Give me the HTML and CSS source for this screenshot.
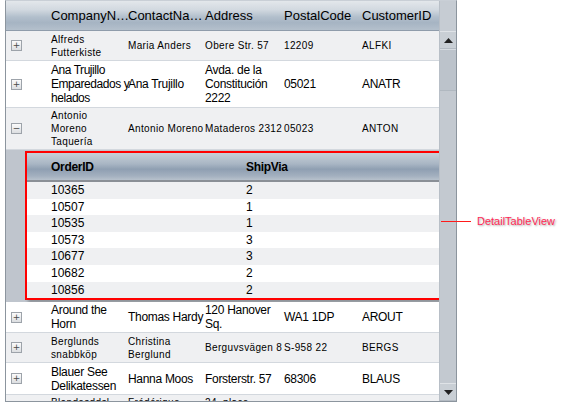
FILE: index.html
```html
<!DOCTYPE html>
<html>
<head>
<meta charset="utf-8">
<link rel="stylesheet" href="styles.css">
</head>
<body>
<div class="page">
  <div class="grid">
    <div class="main">
      <table class="master">
        <colgroup>
          <col class="c-exp"><col class="c-company"><col class="c-contact"><col class="c-address"><col class="c-postal"><col class="c-cust">
        </colgroup>
        <thead>
          <tr>
            <th></th><th>CompanyN…</th><th>ContactNa…</th><th>Address</th><th>PostalCode</th><th>CustomerID</th>
          </tr>
        </thead>
        <tbody>
          <tr class="alt small r1">
            <td><span class="exp">+</span></td><td>Alfreds<br>Futterkiste</td><td>Maria Anders</td><td>Obere Str. 57</td><td>12209</td><td>ALFKI</td>
          </tr>
          <tr class="r2">
            <td><span class="exp">+</span></td><td><span class="tight">Ana Trujillo<br>Emparedados y<br>helados</span></td><td>Ana Trujillo</td><td>Avda. de la<br>Constitución<br>2222</td><td>05021</td><td>ANATR</td>
          </tr>
          <tr class="alt small r3">
            <td><span class="exp">−</span></td><td>Antonio<br>Moreno<br>Taquería</td><td>Antonio Moreno</td><td>Mataderos 2312</td><td>05023</td><td>ANTON</td>
          </tr>
          <tr class="detail-row">
            <td class="gutter"></td>
            <td colspan="5" class="detail-cell">
              <div class="detail-box">
                <table class="detail">
                  <colgroup><col class="d-order"><col class="d-ship"></colgroup>
                  <thead><tr><th>OrderID</th><th>ShipVia</th></tr></thead>
                  <tbody>
                    <tr class="alt"><td>10365</td><td>2</td></tr>
                    <tr><td>10507</td><td>1</td></tr>
                    <tr class="alt"><td>10535</td><td>1</td></tr>
                    <tr><td>10573</td><td>3</td></tr>
                    <tr class="alt"><td>10677</td><td>3</td></tr>
                    <tr><td>10682</td><td>2</td></tr>
                    <tr class="alt"><td>10856</td><td>2</td></tr>
                  </tbody>
                </table>
              </div>
            </td>
          </tr>
          <tr class="r4">
            <td><span class="exp">+</span></td><td>Around the<br>Horn</td><td>Thomas Hardy</td><td>120 Hanover<br>Sq.</td><td>WA1 1DP</td><td>AROUT</td>
          </tr>
          <tr class="alt small r5">
            <td><span class="exp">+</span></td><td>Berglunds<br>snabbköp</td><td>Christina<br>Berglund</td><td>Berguvsvägen 8</td><td>S-958 22</td><td>BERGS</td>
          </tr>
          <tr class="r6">
            <td><span class="exp">+</span></td><td>Blauer See<br>Delikatessen</td><td>Hanna Moos</td><td>Forsterstr. 57</td><td>68306</td><td>BLAUS</td>
          </tr>
          <tr class="alt small r7">
            <td><span class="exp">+</span></td><td>Blondesddsl<br>père et fils</td><td>Frédérique<br>Citeaux</td><td>24, place<br>Kléber</td><td>67000</td><td>BLONP</td>
          </tr>
        </tbody>
      </table>
    </div>
    <div class="scrollbar">
      <div class="sb-cap"></div>
      <div class="sb-btn sb-up"><svg width="9" height="5" viewBox="0 0 9 5"><path d="M0 5 L4.5 0 L9 5 Z" fill="#222"/></svg></div>
      <div class="sb-thumb"></div>
      <div class="sb-track"></div>
      <div class="sb-btn sb-down"><svg width="9" height="5" viewBox="0 0 9 5"><path d="M0 0 L9 0 L4.5 5 Z" fill="#222"/></svg></div>
    </div>
  </div>
  <div class="callout">
    <span class="callout-line"></span>
    <span class="callout-label">DetailTableView</span>
  </div>
</div>
</body>
</html>
```
FILE: styles.css
```css
html, body {
  margin: 0;
  padding: 0;
  background: #ffffff;
}
body {
  font-family: "Liberation Sans", Arial, sans-serif;
  color: #000;
}
.page {
  position: relative;
  width: 561px;
  height: 412px;
}
.grid {
  margin-left: 5px;
  width: 450px;
  height: 400px;
  border: 1px solid #8c959e;
  border-top-color: #c9cfd6;
  display: flex;
  overflow: hidden;
}
.main {
  width: 434px;
  height: 400px;
  overflow: hidden;
}
table {
  border-collapse: collapse;
  table-layout: fixed;
}
.master {
  width: 434px;
}
.c-exp { width: 41px; }
.c-company { width: 77px; }
.c-contact { width: 77px; }
.c-address { width: 79px; }
.c-postal { width: 78px; }
.c-cust { width: 82px; }

.master thead th {
  height: 29px;
  padding: 0 0 0 4px;
  text-align: left;
  font-weight: normal;
  font-size: 13px;
  white-space: nowrap;
  overflow: visible;
  background: linear-gradient(#e3e7eb 0%, #d2d9e0 30%, #b2bfcc 55%, #a6b4c3 75%, #b4c0cc 100%);
  border-bottom: 1px solid #8f9cab;
}
.master tbody td {
  font-size: 12px;
  line-height: 14px;
  letter-spacing: -0.3px;
  padding: 1px 0 1px 4px;
  vertical-align: middle;
  white-space: nowrap;
  overflow: visible;
  border-bottom: 1px solid #d3d8de;
  background: #fff;
}
.tight {
  letter-spacing: -0.45px;
}
.master tbody tr.alt td {
  background: #eff0f2;
}
.master tbody tr.small td {
  font-size: 10px;
  line-height: 13px;
  letter-spacing: 0.35px;
}
.master tbody td:first-child {
  padding-left: 5px;
}
.r1 td { height: 27px; }
.r2 td { height: 44px; }
.r3 td { height: 37px; }
.r4 td { height: 27px; }
.r5 td { height: 27px; }
.r6 td { height: 29px; }

.exp {
  display: block;
  width: 9px;
  height: 9px;
  border: 1px solid #9da3aa;
  background: linear-gradient(#fbfbfb, #dcdee1);
  color: #4a4a4a;
  font-family: "DejaVu Sans", sans-serif;
  font-size: 9px;
  line-height: 9px;
  text-align: center;
  letter-spacing: 0;
}

.master tbody tr.detail-row td {
  padding: 0;
  border-bottom: none;
  background: #bfc5cd;
}
.master tbody tr.detail-row td.detail-cell {
  padding: 1px 0 2px 0;
}
.detail-box {
  border: 2px solid #ff0000;
  margin-left: -22px;
  margin-right: -1px;
  background: #fff;
  box-shadow: 3px 3px 3px rgba(0,0,0,0.25);
}
.d-order { width: 219px; }
.detail {
  width: 100%;
}
.detail thead th {
  height: 27px;
  padding: 0 0 0 24px;
  text-align: left;
  font-size: 12px;
  font-weight: bold;
  background: linear-gradient(#c7cfd8 0%, #a9b6c4 40%, #8f9fb2 60%, #a3b0bf 85%, #b7c1cc 100%);
  border-bottom: 2px solid #8a8f96;
}
.detail thead th + th {
  padding-left: 0;
}
.master tbody .detail tbody td {
  font-size: 12px;
  line-height: 14.6px;
  height: 14.6px;
  padding: 1px 0 1px 24px;
  background: #fff;
  border: none;
  letter-spacing: 0;
}
.master tbody .detail tbody td + td {
  padding-left: 0;
}
.master tbody .detail tbody tr.alt td {
  background: #eff0f2;
}

.scrollbar {
  width: 16px;
  display: flex;
  flex-direction: column;
  background: #c3c9d0;
  border-left: 1px solid #b8bfc7;
}
.sb-cap {
  height: 30px;
  background: #c6ccd3;
}
.sb-btn {
  height: 16px;
  display: flex;
  align-items: center;
  justify-content: center;
  background: #c9cfd5;
  border-top: 1px solid #dfe3e7;
  border-bottom: 1px solid #b3bac2;
}
.sb-thumb {
  height: 40px;
  background: #bcc3cb;
  border-top: 1px solid #d7dce1;
  border-bottom: 1px solid #b0b8c0;
}
.sb-track {
  flex: 1;
  background: #c3c9d0;
}

.callout {
  position: absolute;
  left: 441px;
  top: 215px;
  display: flex;
  align-items: center;
  gap: 6px;
}
.callout-line {
  display: block;
  width: 30px;
  height: 1px;
  background: #ff1a1a;
}
.callout-label {
  font-family: "Liberation Sans", Arial, sans-serif;
  font-size: 11px;
  color: #ff2a55;
  text-shadow: 1px 1px 2px rgba(0,0,0,0.35);
}
```
